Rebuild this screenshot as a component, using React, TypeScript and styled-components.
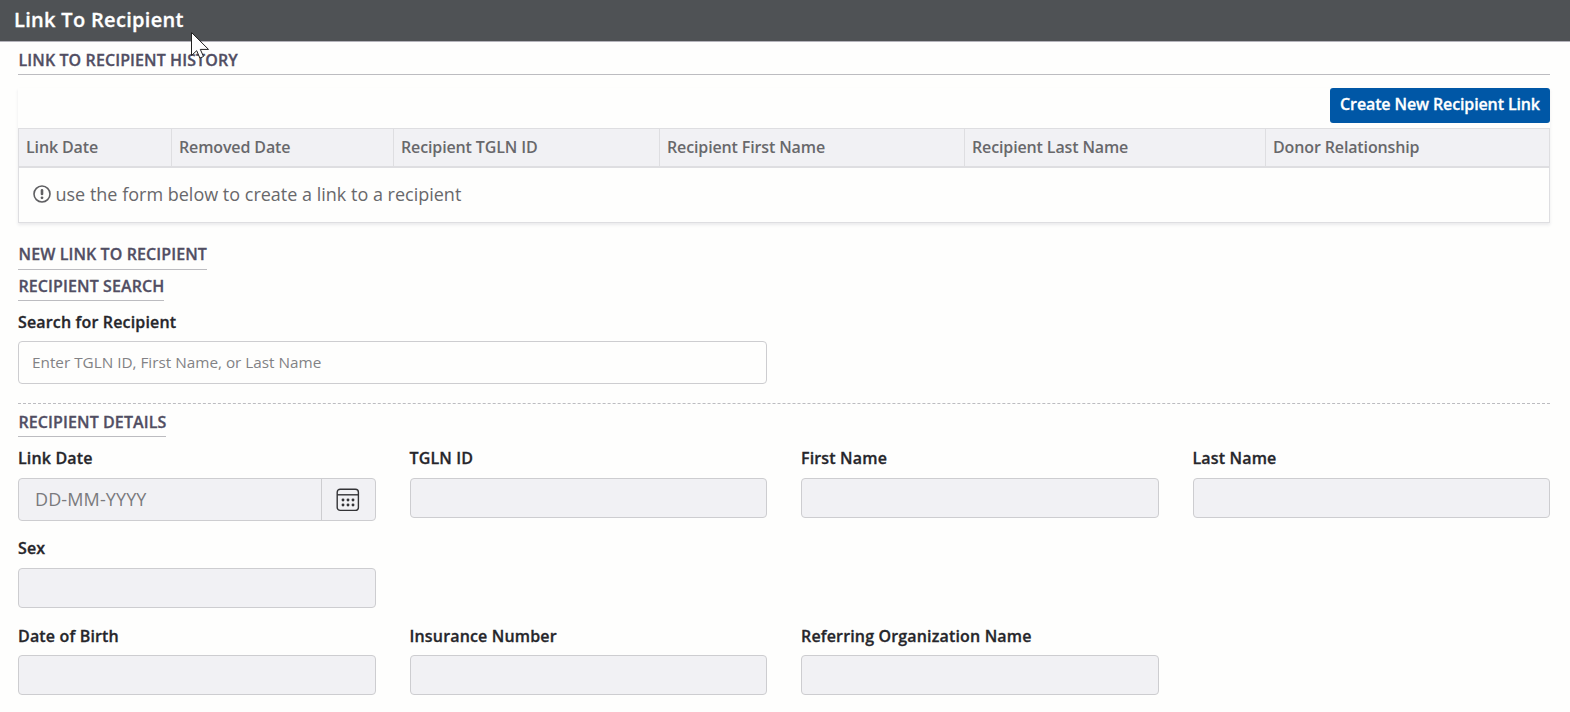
import React from "react";
import styled, { createGlobalStyle, css } from "styled-components";

const GlobalStyle = createGlobalStyle`
  *, *::before, *::after { box-sizing: border-box; }
  body {
    margin: 0;
    background: #fefefd;
    color: #26262b;
    font-family: "Open Sans", "Noto Sans", sans-serif;
    font-size: 16px;
    line-height: 24px;
  }
`;

const strong = css`
  font-weight: 600;
  -webkit-text-stroke: 0.3px currentColor;
`;

const Page = styled.div`
  height: 712px;
  overflow: hidden;
`;

const TitleBar = styled.header`
  height: 42px;
  padding: 4px 14px;
  background: #4f5255;
  border-bottom: 1px solid #b4b3bb;
`;

const Title = styled.h1`
  margin: 0;
  color: #fff;
  font-size: 20px;
  ${strong}
  letter-spacing: 0.31px;
  line-height: 32px;
`;

const Content = styled.main`
  display: flex;
  flex-direction: column;
  align-items: flex-start;
  padding: 6px 20px 0 18px;
`;

const SectionTitle = styled.h2<{ $wide?: boolean; $drop?: number; $pad?: number }>`
  margin: ${(p) => p.$drop ?? 0}px 0 0;
  padding: 0 0 ${(p) => p.$pad ?? 2}px 0.5px;
  width: ${(p) => (p.$wide ? "100%" : "auto")};
  border-bottom: 1px solid #bcbcc0;
  color: #514e63;
  font-size: 16px;
  ${strong}
  letter-spacing: 0.1px;
  line-height: 24px;
  text-transform: uppercase;
`;

const HistoryPanel = styled.section`
  width: 100%;
  margin-top: 13px;
  box-shadow: 0 2px 3px rgba(60, 60, 90, 0.1);
`;

const Toolbar = styled.div`
  display: flex;
  justify-content: flex-end;
  height: 40px;
`;

const PrimaryButton = styled.button`
  width: 220px;
  height: 35px;
  padding: 0 0 3px;
  border: 0;
  border-radius: 3px;
  background: #0057a6;
  color: #fff;
  font: 600 16px/24px "Open Sans", sans-serif;
  ${strong}
  letter-spacing: -0.12px;
  white-space: nowrap;
`;

const TableHead = styled.div`
  display: grid;
  grid-template-columns: 153px 222px 266px 305px 301px 1fr;
  height: 40px;
  border: 1px solid #dedee1;
  border-bottom-width: 2px;
  background: #f1f1f4;
`;

const HeadCell = styled.div`
  padding: 6px 7px;
  border-right: 1px solid #dedee1;
  color: #68686b;
  font-weight: 600;
  letter-spacing: -0.13px;
  white-space: nowrap;
  &:last-child { border-right: 0; }
`;

const EmptyRow = styled.div`
  display: flex;
  align-items: center;
  gap: 4.5px;
  height: 55px;
  padding: 0 14px 2px;
  border: 1px solid #dedee1;
  border-top: 0;
  color: #68686b;
  font-size: 18px;
`;

const Fields = styled.div<{ $top: number }>`
  display: grid;
  grid-template-columns: repeat(4, 1fr);
  column-gap: 34px;
  align-items: start;
  width: 100%;
  margin-top: ${(p) => p.$top}px;
`;

const Field = styled.div<{ $span?: number; $gap?: number }>`
  grid-column: span ${(p) => p.$span ?? 1};
  display: flex;
  flex-direction: column;
  gap: ${(p) => p.$gap ?? 8}px;
`;

const Label = styled.label`
  ${strong}
  letter-spacing: 0.16px;
`;

const TextInput = styled.input<{ $tall?: boolean }>`
  width: 100%;
  height: ${(p) => (p.$tall ? 43 : 40)}px;
  padding: 0 13px 1px;
  border: 1px solid #cdcdd0;
  border-radius: 4px;
  background: #fefefd;
  font: 400 15.3px "Open Sans", sans-serif;
  &:disabled { background: #f1f1f4; }
  &::placeholder { color: #828285; opacity: 1; }
`;

const DateBox = styled.div`
  display: flex;
  height: 43px;
  border: 1px solid #cdcdd0;
  border-radius: 4px;
  background: #f1f1f4;
`;

const DateInput = styled.input`
  flex: 1;
  min-width: 0;
  padding: 0 16px 1px;
  border: 0;
  background: transparent;
  font: 400 18px "Open Sans", sans-serif;
  letter-spacing: 0.12px;
  &::placeholder { color: #7a7a7d; opacity: 1; }
`;

const CalendarButton = styled.span`
  display: flex;
  align-items: center;
  justify-content: center;
  width: 54px;
  padding: 0 1px 0 0;
  border-left: 1px solid #cdcdd0;
`;

const Divider = styled.hr`
  width: 100%;
  margin: 19px 0 0;
  border: 0;
  border-top: 1px dashed #bcbcc0;
`;

const Pointer = styled.svg`
  position: absolute;
  left: 190px;
  top: 31px;
`;

const AlertIcon = () => (
  <svg width="18" height="18" viewBox="0 0 18 18" fill="none" stroke="#5f5f62">
    <circle cx="9" cy="9" r="8" strokeWidth="1.6" />
    <path d="M9 5.4v3.6" strokeWidth="2.6" strokeLinecap="round" />
    <circle cx="9" cy="12.8" r="1.4" fill="#5f5f62" stroke="none" />
  </svg>
);

const CalendarIcon = () => (
  <svg width="24" height="24" viewBox="0 0 24 24" fill="none" stroke="#333336" strokeWidth="1.4">
    <rect x="1.2" y="1.2" width="21.2" height="21.2" rx="3" />
    <path d="M1.2 6.8h21.2" />
    <g fill="#333336" stroke="none">
      {[12, 17].map((y) => [7, 12, 17].map((x) => <circle key={`${x}-${y}`} cx={x} cy={y} r="1.45" />))}
    </g>
  </svg>
);

const columns = [
  "Link Date",
  "Removed Date",
  "Recipient TGLN ID",
  "Recipient First Name",
  "Recipient Last Name",
  "Donor Relationship",
];

const ReadOnlyField = ({ label, gap }: { label: string; gap?: number }) => (
  <Field $gap={gap}>
    <Label>{label}</Label>
    <TextInput disabled aria-label={label} />
  </Field>
);

export default function App() {
  return (
    <Page>
      <GlobalStyle />
      <TitleBar>
        <Title>Link To Recipient</Title>
      </TitleBar>
      <Content>
        <SectionTitle $wide>Link To Recipient History</SectionTitle>
        <HistoryPanel>
          <Toolbar>
            <PrimaryButton>Create New Recipient Link</PrimaryButton>
          </Toolbar>
          <TableHead>
            {columns.map((c) => (
              <HeadCell key={c}>{c}</HeadCell>
            ))}
          </TableHead>
          <EmptyRow>
            <AlertIcon />
            <span>use the form below to create a link to a recipient</span>
          </EmptyRow>
        </HistoryPanel>
        <SectionTitle $drop={19} $pad={3}>New Link To Recipient</SectionTitle>
        <SectionTitle $drop={4}>Recipient Search</SectionTitle>
        <Fields $top={9}>
          <Field $span={2} $gap={7}>
            <Label>Search for Recipient</Label>
            <TextInput $tall placeholder="Enter TGLN ID, First Name, or Last Name" />
          </Field>
        </Fields>
        <Divider />
        <SectionTitle $drop={6}>Recipient Details</SectionTitle>
        <Fields $top={9}>
          <Field>
            <Label>Link Date</Label>
            <DateBox>
              <DateInput placeholder="DD-MM-YYYY" disabled />
              <CalendarButton>
                <CalendarIcon />
              </CalendarButton>
            </DateBox>
          </Field>
          <ReadOnlyField label="TGLN ID" />
          <ReadOnlyField label="First Name" />
          <ReadOnlyField label="Last Name" />
        </Fields>
        <Fields $top={15}>
          <ReadOnlyField label="Sex" />
        </Fields>
        <Fields $top={16}>
          <ReadOnlyField label="Date of Birth" gap={7} />
          <ReadOnlyField label="Insurance Number" gap={7} />
          <ReadOnlyField label="Referring Organization Name" gap={7} />
        </Fields>
      </Content>
      <Pointer width="20" height="29" viewBox="0 0 20 29">
        <path
          d="M1.5 1.5v23l5.2-4.8 3.2 7.4 3.6-1.6-3.2-7.1h8.2z"
          fill="#fff"
          stroke="#222"
          strokeWidth="1"
        />
      </Pointer>
    </Page>
  );
}
